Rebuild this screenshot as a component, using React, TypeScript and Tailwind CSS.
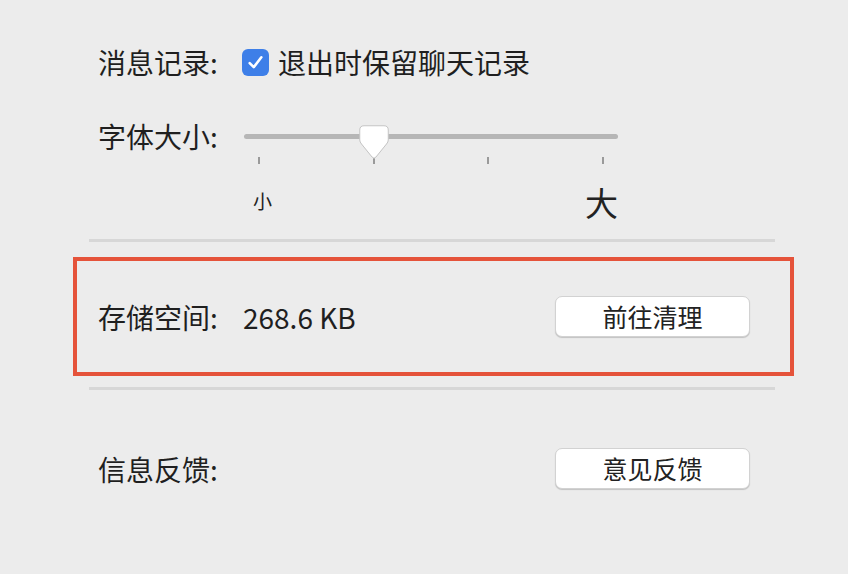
import { useState } from "react";

const font = { fontFamily: '"Noto Sans CJK SC", "Noto Sans", sans-serif' };

const Checkbox = ({ checked, onToggle }: { checked: boolean; onToggle: () => void }) => (
  <button
    onClick={onToggle}
    className={
      checked
        ? "w-[27px] h-[27px] rounded-[6px] bg-[#3e7fe8] flex items-center justify-center"
        : "w-[27px] h-[27px] rounded-[6px] bg-white border border-[#b8b8b8] flex items-center justify-center"
    }
  >
    {checked && (
      <svg width="21" height="21" viewBox="0 0 18 18" fill="none">
        <path d="M4 9.5 L7.5 13 L14 4.5" stroke="white" strokeWidth="2.2" strokeLinecap="round" strokeLinejoin="round" />
      </svg>
    )}
  </button>
);

const MacButton = ({ children }: { children: React.ReactNode }) => (
  <button className="w-[195px] h-[41px] rounded-[7px] bg-white border border-[#d2d2d2] shadow-[0_1px_1px_rgba(0,0,0,0.18)] text-[25px] text-[#222] leading-none flex items-center justify-center">
    {children}
  </button>
);

const Divider = () => <div className="ml-[89px] w-[686px] h-[3px] bg-[#d7d7d7]" />;

const FontSlider = () => {
  const [step, setStep] = useState(1);
  const stepLeft = [0, 114.67, 229.33, 344][step];
  return (
    <div className="flex flex-col">
      <div className="relative w-[374px] h-[28px]">
        <div className="absolute left-0 right-0 top-[12px] h-[5px] rounded-full bg-[#b6b6b6]" />
        <svg
          className="absolute top-[3px]"
          style={{ left: stepLeft }}
          width="30"
          height="36"
          viewBox="0 0 30 36"
        >
          <path
            d="M5 0.75 H25 Q29.25 0.75 29.25 5 V15 Q29.25 17 27.5 19 L17 32 Q15 34.5 13 32 L2.5 19 Q0.75 17 0.75 15 V5 Q0.75 0.75 5 0.75 Z"
            fill="white"
            stroke="#c4c4c4"
            strokeWidth="1"
          />
        </svg>
      </div>
      <div className="mt-[7px] px-[14px] flex justify-between w-[374px] h-[7px]">
        {[0, 1, 2, 3].map((i) => (
          <button key={i} onClick={() => setStep(i)} className="w-[2px] h-[7px] bg-[#9a9a9a]" />
        ))}
      </div>
      <div className="flex justify-between items-start w-[374px] pl-[9px] pr-0">
        <span className="mt-[27px] text-[19px] leading-[19px] text-[#222]">小</span>
        <span className="mt-[22px] text-[33px] leading-[33px] text-[#222]">大</span>
      </div>
    </div>
  );
};

export default function App() {
  const [keep, setKeep] = useState(true);
  return (
    <div style={font} className="w-full h-[574px] bg-[#ececec] text-[#1f1f1f] flex flex-col overflow-hidden">
      <div className="pt-[48px] pl-[98px] flex flex-col">
        <div className="flex items-center h-[28px]">
          <span className="w-[144px] text-[28px] leading-none">消息记录:</span>
          <Checkbox checked={keep} onToggle={() => setKeep(!keep)} />
          <span className="ml-[9px] text-[28px] leading-none">退出时保留聊天记录</span>
        </div>
        <div className="flex items-start mt-[46px]">
          <span className="w-[146px] h-[28px] flex items-center text-[28px] leading-none">字体大小:</span>
          <FontSlider />
        </div>
      </div>
      <div className="mt-[20px]">
        <Divider />
      </div>
      <div className="mt-[15px] ml-[73px] w-[721px] h-[119px] border-4 border-[#e5533a] flex items-center pl-[21px] pr-[40px]">
        <span className="w-[145px] text-[28px] leading-none">存储空间:</span>
        <span className="text-[28px] leading-none">268.6 KB</span>
        <div className="ml-auto">
          <MacButton>前往清理</MacButton>
        </div>
      </div>
      <div className="mt-[11px]">
        <Divider />
      </div>
      <div className="mt-[58px] ml-[98px] w-[652px] flex items-center justify-between">
        <span className="text-[28px] leading-none">信息反馈:</span>
        <MacButton>意见反馈</MacButton>
      </div>
    </div>
  );
}
